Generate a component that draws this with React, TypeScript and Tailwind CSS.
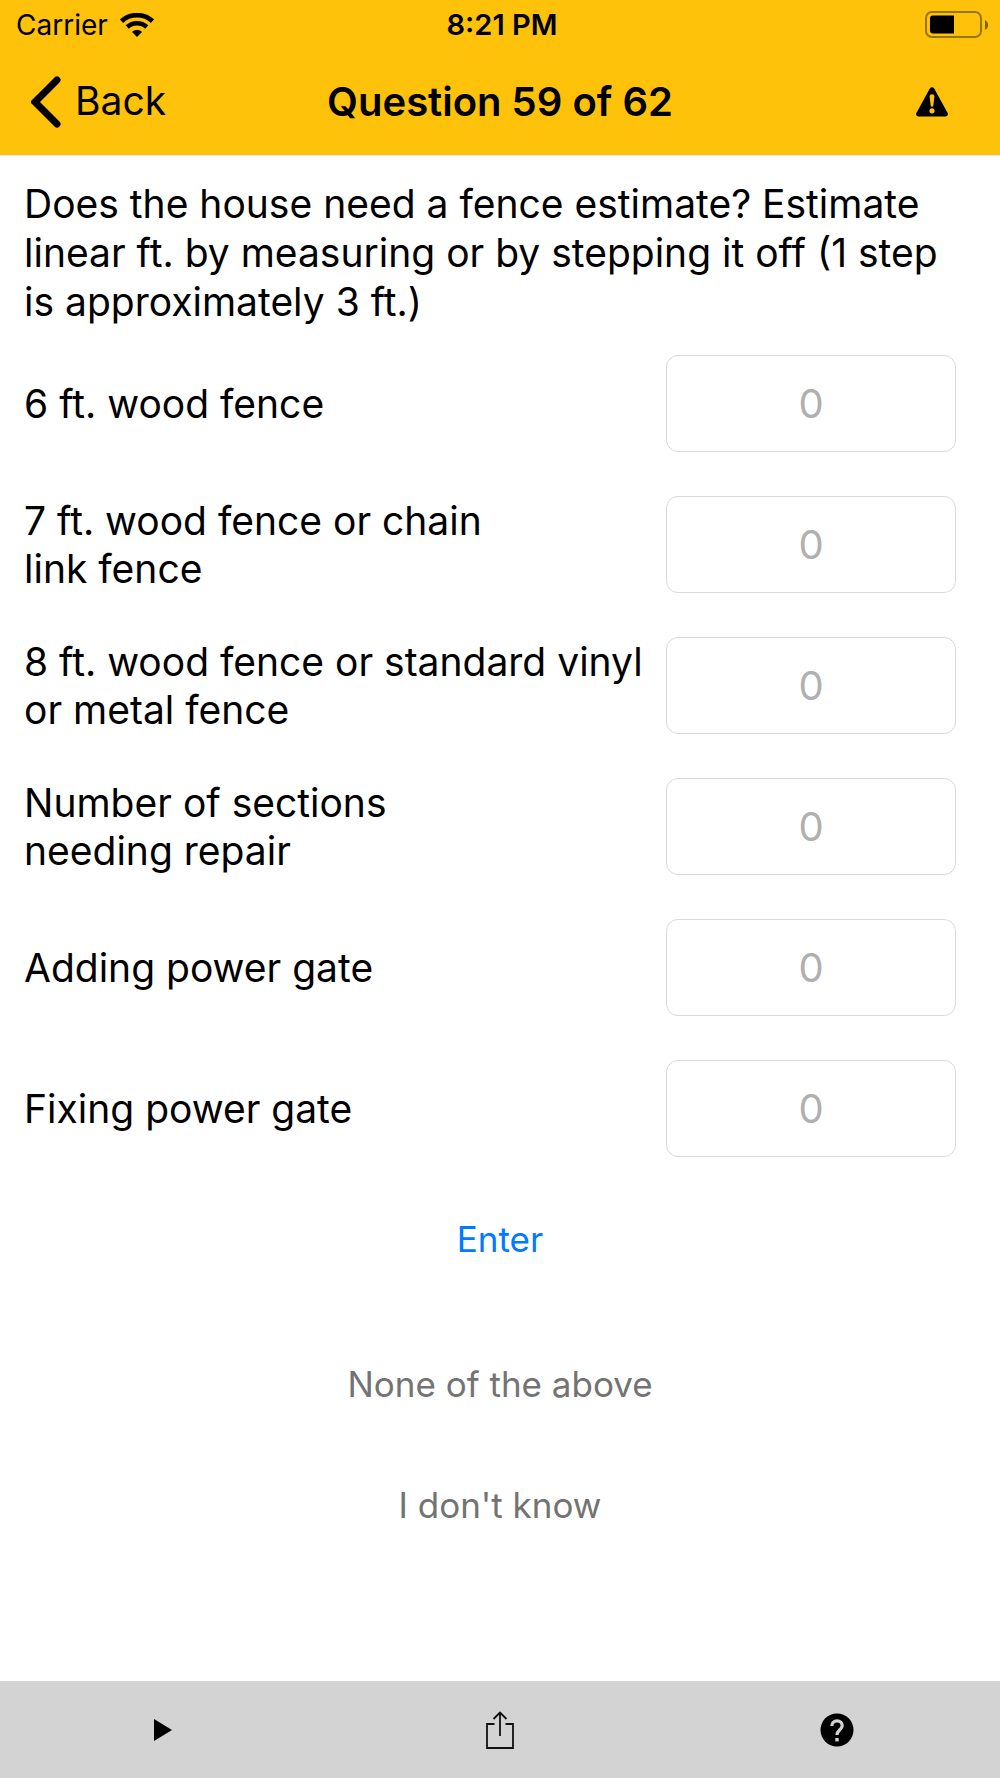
import { useState } from 'react';

const fields = [
  { id: 'wood6', label: '6 ft. wood fence' },
  { id: 'wood7', label: '7 ft. wood fence or chain\nlink fence' },
  { id: 'wood8', label: '8 ft. wood fence or standard vinyl\nor metal fence' },
  { id: 'repair', label: 'Number of sections\nneeding repair' },
  { id: 'addGate', label: 'Adding power gate' },
  { id: 'fixGate', label: 'Fixing power gate' },
];

const WifiIcon = () => (
  <svg width="34" height="24" viewBox="0 0 34 24" fill="none" aria-hidden="true">
    <path d="M1.500 8.200C10 .2 24 .2 32.500 8.200" stroke="black" strokeWidth="4.800" />
    <path d="M7.200 14C12.800 8.900 21.200 8.900 26.800 14" stroke="black" strokeWidth="4.600" />
    <path d="M17 24l-5-5c2.800-2.600 7.200-2.600 10 0z" fill="black" />
  </svg>
);

const BatteryIcon = () => (
  <svg width="64" height="28" viewBox="0 0 64 28" fill="none" aria-hidden="true">
    <rect x="2" y="1" width="55" height="25" rx="6" stroke="black" strokeOpacity="0.4" strokeWidth="2" />
    <path d="M9 4.500h21v18H9a3 3 0 0 1-3-3v-12a3 3 0 0 1 3-3z" fill="black" />
    <path d="M61 9c4 2 4 8 0 10z" fill="black" fillOpacity="0.5" />
  </svg>
);

const ChevronIcon = () => (
  <svg width="30" height="52" viewBox="0 0 30 52" fill="none" aria-hidden="true">
    <path d="M26 4L4 26l22 22" stroke="black" strokeWidth="7" strokeLinecap="round" />
  </svg>
);

const WarningIcon = () => (
  <svg width="34" height="30" viewBox="0 0 34 30" fill="none" aria-hidden="true">
    <path d="M14.800 1.500a2.500 2.500 0 0 1 4.400 0L32.600 26a2.300 2.300 0 0 1-2 3.500H3.400a2.300 2.300 0 0 1-2-3.500z" fill="black" />
    <path d="M14.600 9.500c0-3 4.800-3 4.800 0l-1.200 10h-2.400z" fill="#ffc20a" />
    <circle cx="17" cy="23.800" r="2.600" fill="#ffc20a" />
  </svg>
);

const PlayIcon = () => (
  <svg width="18" height="24" viewBox="0 0 18 24" aria-hidden="true">
    <path d="M0 1l18 11L0 23z" fill="black" />
  </svg>
);

const ShareIcon = () => (
  <svg width="28" height="38" viewBox="0 0 28 38" fill="none" stroke="#111" strokeWidth="1.800" aria-hidden="true">
    <path d="M8.500 13H1v24h26V13h-7.500M14 25V1.500M7.500 8L14 1.500 20.500 8" />
  </svg>
);

const HelpIcon = () => (
  <svg width="34" height="34" viewBox="0 0 34 34" fill="none" aria-hidden="true">
    <circle cx="17" cy="17" r="16.500" fill="black" />
    <path d="M11.800 13c0-3 2.200-5.200 5.200-5.200s5.200 2.200 5.200 4.900c0 4-5.200 4.300-5.200 9.300" stroke="#d3d3d3" strokeWidth="3.200" />
    <rect x="15.300" y="25" width="3.400" height="3.400" fill="#d3d3d3" />
  </svg>
);

const App = () => {
  const [values, setValues] = useState<Record<string, string>>({});

  return (
    <div className="flex min-h-screen flex-col bg-white font-['Inter',sans-serif] text-black">
      <header className="border-b border-gray-200 bg-[#ffc20a]">
        <div className="grid h-[50px] grid-cols-[1fr_auto_1fr] items-center pr-3 pl-4 text-[28px] leading-8">
          <div className="flex items-center gap-3">
            <span>Carrier</span>
            <WifiIcon />
          </div>
          <span className="text-center text-[29px] font-semibold">8:21 PM</span>
          <div className="flex justify-end">
            <BatteryIcon />
          </div>
        </div>
        <div className="grid h-[105px] grid-cols-[1fr_auto_1fr] items-center pr-[51px] pb-0.5 pl-[31px]">
          <button type="button" className="flex items-center gap-[14px] text-[39px]">
            <ChevronIcon />
            Back
          </button>
          {/* the side paddings differ, so the title gets the difference back */}
          <h1 className="pl-5 text-[40px] font-semibold">Question 59 of 62</h1>
          <button type="button" aria-label="Report a problem" className="justify-self-end">
            <WarningIcon />
          </button>
        </div>
      </header>

      <main className="flex grow flex-col pt-[23px]">
        <p className="px-6 text-[39px] leading-[49px]">
          Does the house need a fence estimate? Estimate linear ft. by measuring or by stepping it off (1 step is
          approximately 3 ft.)
        </p>

        <form onSubmit={(e) => e.preventDefault()}>
          <div className="mt-[29px] flex flex-col gap-11 pr-11 pl-6">
            {fields.map(({ id, label }) => (
              <div key={id} className="flex items-center justify-between">
                <label htmlFor={id} className="text-[39px] leading-[48px] whitespace-pre-line">
                  {label}
                </label>
                <input
                  id={id}
                  type="text"
                  inputMode="numeric"
                  placeholder="0"
                  value={values[id] ?? ''}
                  onChange={(e) => setValues({ ...values, [id]: e.target.value })}
                  className="h-[97px] w-[290px] shrink-0 rounded-xl border border-[#d9d9d9] text-center text-[40px] placeholder:text-[#b0b0b0]"
                />
              </div>
            ))}
          </div>
          <div className="mt-[62px] flex justify-center">
            <button type="submit" className="text-[35px] leading-10 text-[#007aff]">
              Enter
            </button>
          </div>
        </form>

        <div className="mt-[105px] flex flex-col items-center gap-[81px] text-[35px] leading-10 text-[#737373]">
          <button type="button">None of the above</button>
          <button type="button">I don't know</button>
        </div>
      </main>

      <footer className="flex h-[97px] items-center justify-between bg-[#d3d3d3] px-[146px]">
        <button type="button" aria-label="Play" className="flex w-[34px] justify-center">
          <PlayIcon />
        </button>
        <button type="button" aria-label="Share" className="flex w-[34px] justify-center">
          <ShareIcon />
        </button>
        <button type="button" aria-label="Help" className="flex w-[34px] justify-center">
          <HelpIcon />
        </button>
      </footer>
    </div>
  );
};

export default App;
